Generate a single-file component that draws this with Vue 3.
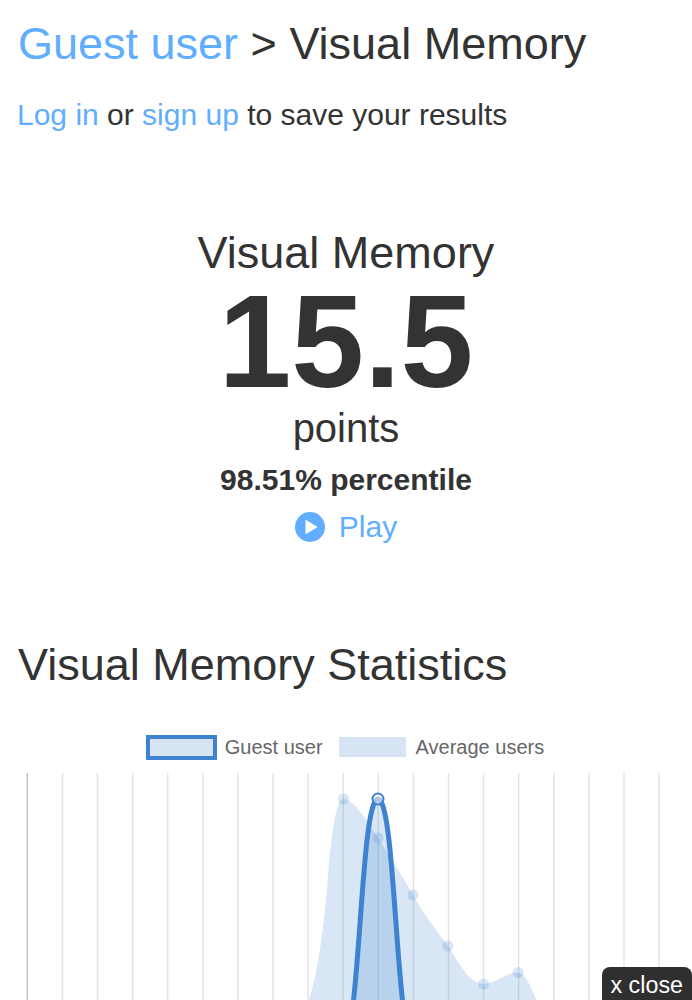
<template>
  <div class="page">
    <h1 class="crumbs"><a class="link">Guest user</a> &gt; Visual Memory</h1>
    <p class="login">
      <a class="link">Log in</a> or <a class="link">sign up</a> to save your results
    </p>

    <section class="score">
      <div class="score-name">Visual Memory</div>
      <div class="score-value">15.5</div>
      <div class="score-unit">points</div>
      <div class="score-pct">98.51% percentile</div>
      <a class="play link">
        <svg class="play-icon" viewBox="0 0 30 30">
          <circle cx="15" cy="15" r="15" fill="#61adff" />
          <path d="M11 8 Q10.5 7.6 10.5 8.4 L10.5 21.6 Q10.5 22.4 11 22 L22 15.4 Q22.5 15 22 14.6 Z" fill="#fff" />
        </svg>
        Play
      </a>
    </section>

    <h2 class="stats-title">Visual Memory Statistics</h2>

    <div class="legend">
      <span class="swatch swatch-user"></span>
      <span class="legend-label">Guest user</span>
      <span class="swatch swatch-avg"></span>
      <span class="legend-label">Average users</span>
    </div>

    <svg class="chart" viewBox="0 0 692 240" width="692" height="240">
      <line
        v-for="(x, i) in gridLines"
        :key="x"
        :x1="x"
        :x2="x"
        y1="0"
        y2="240"
        :stroke="i === 0 ? '#c4c4c4' : '#e4e4e4'"
        stroke-width="1.5"
      />
      <path :d="avgPath" fill="rgba(62,131,207,0.2)" />
      <circle
        v-for="p in avgPoints"
        :key="p[0]"
        :cx="p[0]"
        :cy="p[1]"
        r="5.5"
        fill="rgba(62,131,207,0.2)"
      />
      <path :d="userPath" fill="rgba(62,131,207,0.2)" stroke="#3e83cf" stroke-width="5" />
      <circle cx="378" cy="26" r="5.5" fill="rgba(255,255,255,0.55)" stroke="#3e83cf" stroke-width="2" />
    </svg>

    <div class="close-tab">x close</div>
  </div>
</template>

<script setup>
const gridLines = Array.from({ length: 19 }, (_, i) => 27.3 + i * 35.1)

const avgPoints = [
  [343.5, 26],
  [378, 65],
  [413, 122],
  [448, 173],
  [483.5, 211],
  [518, 199.5],
]

const avgPath =
  'M304 240 C316 215 324 160 329 90 C333 50 337 26 343.5 26 ' +
  'C353 26 368 48 378 65 C390 85 402 102 413 122 C424 142 436 156 448 173 ' +
  'C460 192 470 211 483.5 211 C494 211 506 199.5 518 199.5 C526 199.5 533 218 541 240 Z'

const userPath =
  'M352 240 C361 175 364 26 378 26 C392 26 395 175 404 240'
</script>

<style>
html,
body {
  margin: 0;
  overflow: hidden;
  background: #fff;
}
</style>

<style scoped>
.page {
  position: relative;
  width: 692px;
  height: 1000px;
  overflow: hidden;
  font-family: "Liberation Sans", Arial, sans-serif;
  color: #333;
}
.link {
  color: #61adff;
  text-decoration: none;
}
.crumbs {
  margin: 0;
  padding: 18px 18px 0;
  font-size: 45px;
  line-height: 52px;
  font-weight: 400;
}
.login {
  margin: 27px 0 0;
  padding: 0 17px;
  font-size: 30px;
  line-height: 36px;
}
.score {
  margin-top: 94px;
  display: flex;
  flex-direction: column;
  align-items: center;
}
.score-name {
  font-size: 45px;
  line-height: 52px;
}
.score-value {
  margin: 4px 0 5px;
  font-size: 131px;
  line-height: 118px;
  font-weight: 700;
}
.score-unit {
  font-size: 40px;
  line-height: 44px;
}
.score-pct {
  margin-top: 12px;
  font-size: 30px;
  line-height: 36px;
  font-weight: 700;
}
.play {
  margin-top: 11px;
  display: flex;
  align-items: center;
  gap: 14px;
  font-size: 30px;
  line-height: 36px;
}
.play-icon {
  width: 30px;
  height: 30px;
}
.stats-title {
  margin: 94px 0 0;
  padding: 0 18px;
  font-size: 45px;
  line-height: 52px;
  font-weight: 400;
}
.legend {
  margin-top: 43px;
  padding-right: 2px;
  display: flex;
  justify-content: center;
  align-items: center;
  height: 26px;
  font-size: 20px;
  color: #666;
}
.swatch {
  box-sizing: border-box;
  background: #d7e4f3;
}
.swatch-user {
  width: 71px;
  height: 25px;
  border: 4px solid #3e83cf;
}
.swatch-avg {
  width: 67px;
  height: 20px;
  margin-right: 2px;
}
.legend-label {
  margin: 0 16px 0 8px;
}
.legend-label:last-child {
  margin-right: 0;
}
.chart {
  display: block;
  margin-top: 13px;
}
.close-tab {
  position: absolute;
  right: 0;
  bottom: 0;
  padding: 3px 9px 0 8px;
  height: 33px;
  box-sizing: border-box;
  background: #2f2f2f;
  border-radius: 8px 8px 0 0;
  color: #fff;
  font-size: 23.3px;
  line-height: 30px;
}
</style>
